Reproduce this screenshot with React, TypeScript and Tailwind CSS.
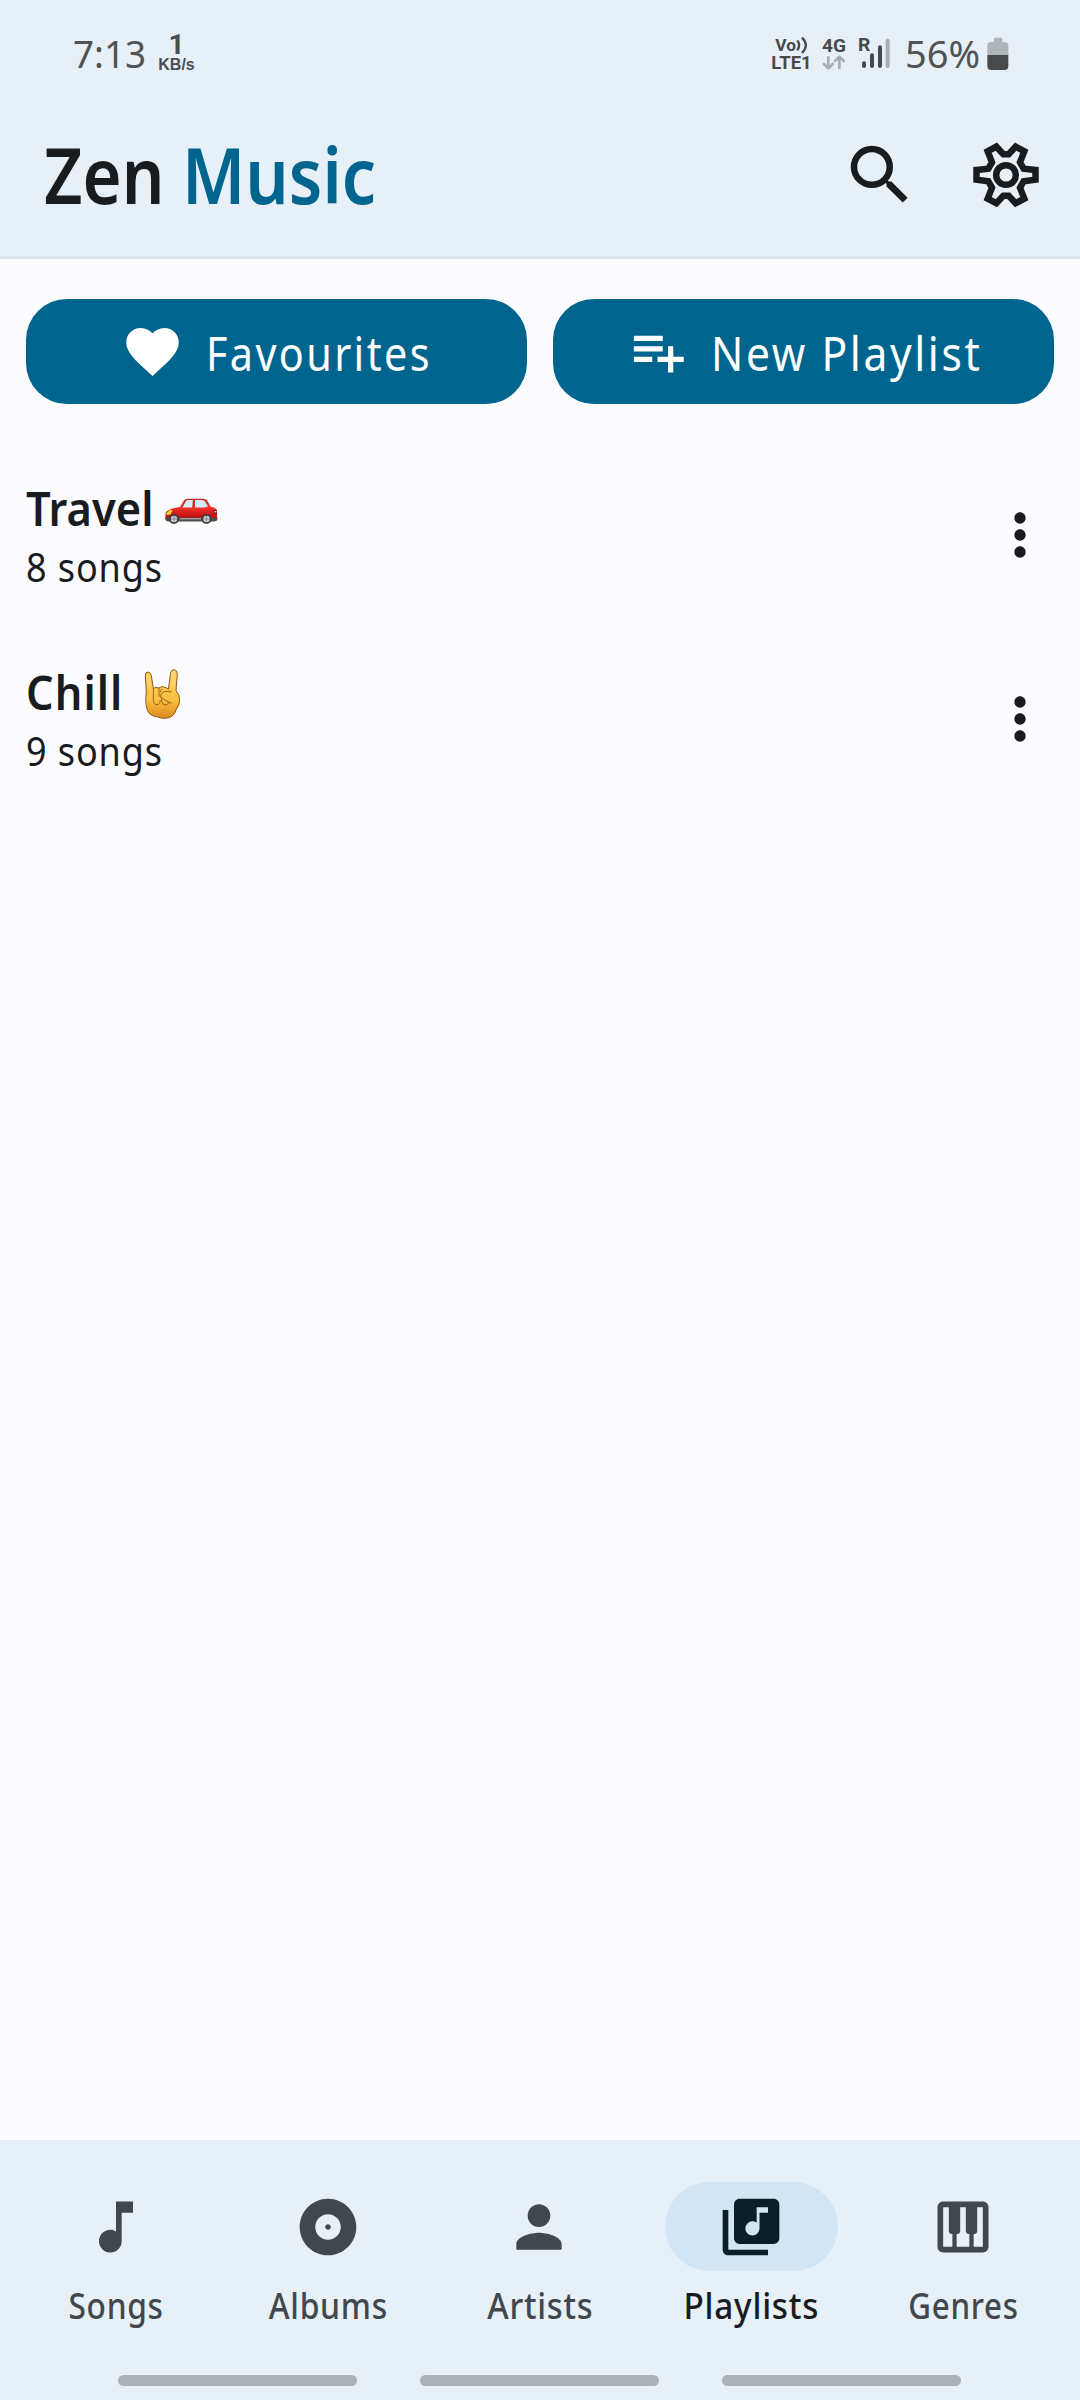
import React from "react";
import {
  MdAlbum,
  MdFavorite,
  MdLibraryMusic,
  MdMoreVert,
  MdMusicNote,
  MdPerson,
  MdPiano,
  MdPlaylistAdd,
  MdSearch,
} from "react-icons/md";

function NetSpeed() {
  return (
    <div className="mt-[2px] ml-[13px] flex w-[37px] flex-col items-center font-bold text-[#4b4d4f]" aria-label="1 KB/s">
      <span className="font-['Roboto'] text-[28px] leading-[22px]">1</span>
      <span className="font-['Liberation_Sans'] text-[16px] leading-[18px]">KB/s</span>
    </div>
  );
}

function NetworkIcons() {
  return (
    <svg className="h-[40px] w-[122px] shrink-0" viewBox="90 100 366 120" aria-label="VoLTE 4G roaming signal">
      <g fill="#48494b" className="font-['Roboto'] font-bold">
        <text x="106" y="153" className="text-[50px]" textLength="62" lengthAdjust="spacingAndGlyphs">Vo</text>
        <text x="94" y="207" className="text-[54px]" textLength="121" lengthAdjust="spacingAndGlyphs">LTE1</text>
        <text x="246" y="157" className="text-[56px]" textLength="72" lengthAdjust="spacingAndGlyphs">4G</text>
        <text x="354" y="154" className="text-[55px]" textLength="37" lengthAdjust="spacingAndGlyphs">R</text>
      </g>
      <g fill="none" stroke="#48494b" strokeWidth="7">
        <path d="M172 122Q183 137 172 152" />
        <path d="M186 114Q209 137 186 160" />
      </g>
      <g fill="none" stroke="#a9adb3" strokeWidth="8" strokeLinecap="round" strokeLinejoin="round">
        <path d="M265 173V205M252 193L265 206L278 193" />
        <path d="M298 205V173M285 184L298 171L311 184" />
      </g>
      <g strokeWidth="12" strokeLinecap="round" stroke="#48494b">
        <path d="M372 191V199M396 167V199M420 143V199" />
        <path d="M443 123V199" stroke="#a9adb0" />
      </g>
    </svg>
  );
}

function Battery() {
  return (
    <svg className="ml-[7px] h-[33px] w-[22px] shrink-0" viewBox="0 0 66 99">
      <path d="M20 15V7Q20 2 25 2H41Q46 2 46 7V15H52Q64 15 64 27V55H1V27Q1 15 13 15Z" fill="#adb5b9" />
      <path d="M1 54H64V87Q64 99 52 99H13Q1 99 1 87Z" fill="#48494b" />
    </svg>
  );
}

function GearIcon() {
  return (
    <svg className="h-[80px] w-[82px]" viewBox="0 0 246 240" fill="none" stroke="#191c1e" strokeWidth="19.5">
      <circle cx="123" cy="120" r="29.5" />
      <path d="M211.500 105V134L176 139L165 158L178 191L152 204.500L131 182H115L94 204.500L68 191L81 158L70 139L34.500 134V105L70 101L81 82L68 49L94 35L115 57.500H131L152 35L178 49L165 82L176 101Z" />
    </svg>
  );
}

function CarEmoji() {
  return (
    <svg className="mt-[20px] ml-[11px] h-[27px] w-[54px] shrink-0" viewBox="0 0 54 27" role="img" aria-label="🚗">
      <defs>
        <linearGradient id="carBody" x1="0" y1="0" x2="0" y2="1">
          <stop offset="0" stopColor="#c4221d" />
          <stop offset=".45" stopColor="#f5322a" />
          <stop offset="1" stopColor="#bb0c0c" />
        </linearGradient>
      </defs>
      <path d="M1.500 20L1.500 15Q3 11 16 9L20 2.500Q21 1 24 .8H39Q42 .8 43 2.500L47 9Q52.500 9.500 53 13V20Z" fill="url(#carBody)" />
      <path d="M18.500 9.500L22 3Q22.600 2 25 2H29L28 9.500Z" fill="#d5ecfb" />
      <path d="M31 9.500V2H38Q40 2 41 3.500L44 8.500L40 9.500Z" fill="#d5ecfb" />
      <path d="M2 15.500L6 12L8.500 12.500L6.500 16.500L3 17Z" fill="#e6dc3c" />
      <path d="M49 12H53V16H50Z" fill="#8d1115" />
      <path d="M50.500 13H52.500V14.500H50.500Z" fill="#f1d2d0" />
      <path d="M1 19.500H53.500V21Q53 23.500 50 23.500H4Q1 23 1 19.500Z" fill="#55484a" />
      <path d="M16 20.800H37" stroke="#c9c2c0" strokeWidth="1" />
      <g fill="#3a3c40">
        <circle cx="10" cy="21" r="5" />
        <circle cx="42.500" cy="21" r="5" />
      </g>
      <g fill="#cdd1d6">
        <circle cx="10" cy="21" r="3.200" />
        <circle cx="42.500" cy="21" r="3.200" />
      </g>
      <g fill="none" stroke="#6b6e74" strokeWidth=".7">
        <path d="M10 18V24M7 21H13M42.500 18V24M39.500 21H45.500" />
      </g>
    </svg>
  );
}

function HornsEmoji() {
  return (
    <svg className="-mt-[2px] ml-[14px] h-[65px] w-[55px] shrink-0" viewBox="0 0 165 195" role="img" aria-label="🤘">
      <defs>
        <linearGradient id="skin" x1="0" y1="0" x2="0" y2="1">
          <stop offset="0" stopColor="#ffd466" />
          <stop offset=".6" stopColor="#fcc142" />
          <stop offset="1" stopColor="#dd8a20" />
        </linearGradient>
      </defs>
      <path
        d="M28 46Q28 36 36 36Q44 37 46 47L52 85Q60 80 69 84Q77 76 87 82Q94 84 97 88L104 38Q106 28 115 29Q124 31 124 42L120 92Q132 105 131 122Q129 140 121 147Q117 168 95 174Q78 177 65 171Q35 168 31 140Q27 118 31 96Z"
        fill="url(#skin)"
        stroke="#8c5b1c"
        strokeWidth="3"
      />
      <g fill="none" stroke="#99651d" strokeWidth="3" strokeLinecap="round">
        <path d="M52 85V121Q53 134 63 134Q72 133 73 121" />
        <path d="M69 84V110M73 96Q72 90 78 88M74 110Q73 100 82 96Q94 92 106 96M74 111Q90 124 106 130M77 115V125Q80 136 91 135Q96 133 98 129" />
      </g>
      <path d="M37 45L39 82M114 38L110 82" stroke="#ffe08a" strokeWidth="4" strokeLinecap="round" opacity=".7" />
    </svg>
  );
}

function Row({ name, width, scale, count, emoji }: { name: string; width: string; scale: string; count: string; emoji: React.ReactNode }) {
  return (
    <li className="flex h-[184px] items-start justify-between px-[26px]">
      <div className="pt-[35px]">
        <div className="flex h-[60px] items-start">
          <span className={width}>
            <span className={"inline-block origin-left text-[47px] leading-[60px] font-semibold " + scale}>{name}</span>
          </span>
          {emoji}
        </div>
        <p className="w-[136px] origin-left scale-x-[.9] text-[40px] leading-[57px] tracking-[1px] whitespace-nowrap">{count}</p>
      </div>
      <MdMoreVert className="mt-[58px] h-[68px] w-[68px]" />
    </li>
  );
}

const tabs = [
  { label: "Songs", icon: MdMusicNote, scale: "scale-x-[.88]" },
  { label: "Albums", icon: MdAlbum, scale: "scale-x-[.885]" },
  { label: "Artists", icon: MdPerson, scale: "scale-x-[.91]" },
  { label: "Playlists", icon: MdLibraryMusic, scale: "scale-x-[.925]", active: true },
  { label: "Genres", icon: MdPiano, scale: "scale-x-[.87]" },
];

export default function App() {
  return (
    <div className="flex h-[2400px] w-[1080px] flex-col overflow-hidden bg-[#fcfcff] font-['Noto_Sans',sans-serif] text-[#191c1e]">
      <header className="h-[259px] shrink-0 border-b-[3px] border-[#dce3ea] bg-[#e7eff7]">
        <div className="flex h-[92px] items-center justify-between pt-[14px] pr-[71px] pl-[73px] text-[38px] leading-[52px] text-[#505254]">
          <div className="flex items-center">
            <span className="w-[72px] origin-left scale-x-[.97]">7:13</span>
            <NetSpeed />
          </div>
          <div className="flex items-center">
            <NetworkIcons />
            <span className="ml-[13px] w-[75px] whitespace-nowrap">56%</span>
            <Battery />
          </div>
        </div>
        <div className="flex h-[164px] items-center pt-[2px] pr-[33px] pl-[44px]">
          <h1 className="flex text-[77px] leading-[80px] font-semibold whitespace-nowrap">
            <span className="w-[138px]">
              <span className="inline-block origin-left scale-x-[.87]">Zen</span>
            </span>
            <span className="text-[#00658e]">
              <span className="inline-block origin-left scale-x-[.885]">Music</span>
            </span>
          </h1>
          <MdSearch className="ml-auto h-[78px] w-[78px]" />
          <span className="ml-[46px]">
            <GearIcon />
          </span>
        </div>
      </header>

      <main className="grow">
        <div className="grid grid-cols-2 gap-[26px] px-[26px] pt-[40px] text-[47px] leading-[60px] text-white">
          <button className="flex h-[105px] items-center justify-center rounded-[41px] bg-[#00658e]">
            <MdFavorite className="h-[63px] w-[63px]" />
            <span className="mt-[2px] ml-[22px] w-[226px] text-left">
              <span className="inline-block origin-left scale-x-[.88] tracking-[2.7px] whitespace-nowrap">Favourites</span>
            </span>
          </button>
          <button className="flex h-[105px] items-center justify-center rounded-[41px] bg-[#00658e]">
            <MdPlaylistAdd className="h-[63px] w-[63px]" />
            <span className="mt-[2px] ml-[22px] w-[271px] text-left">
              <span className="inline-block origin-left scale-x-[.905] tracking-[2.9px] whitespace-nowrap">New Playlist</span>
            </span>
          </button>
        </div>

        <ul className="mt-[39px]">
          <Row name="Travel" width="w-[127px]" scale="scale-x-[.925]" count="8 songs" emoji={<CarEmoji />} />
          <Row name="Chill" width="w-[96px]" scale="scale-x-[.92] tracking-[1.2px]" count="9 songs" emoji={<HornsEmoji />} />
        </ul>
      </main>

      <nav className="flex h-[260px] shrink-0 flex-col bg-[#e7eff7] pt-[42px]">
        <div className="grid grid-cols-5 pr-[11px] pl-[10px]">
          {tabs.map(({ label, icon: Icon, scale, active }) => (
            <div key={label} className={active ? "flex flex-col items-center" : "flex flex-col items-center text-[#41484d]"}>
              <span className={active ? "flex h-[89px] w-[173px] items-center justify-center rounded-full bg-[#d2e5f4] text-[#0a1e2a]" : "flex h-[89px] w-[173px] items-center justify-center"}>
                <Icon className="h-[68px] w-[68px]" />
              </span>
              <span className={"mt-[10px] ml-[1px] text-[36px] leading-[50px] font-[550] tracking-[.8px] " + scale}>{label}</span>
            </div>
          ))}
        </div>
        <div className="mt-auto mb-[14px] flex pl-[118px] gap-[63px]">
          <span className="h-[11px] w-[239px] rounded-full bg-[#abb2b5]" />
          <span className="h-[11px] w-[239px] rounded-full bg-[#abb2b5]" />
          <span className="h-[11px] w-[239px] rounded-full bg-[#abb2b5]" />
        </div>
      </nav>
    </div>
  );
}
